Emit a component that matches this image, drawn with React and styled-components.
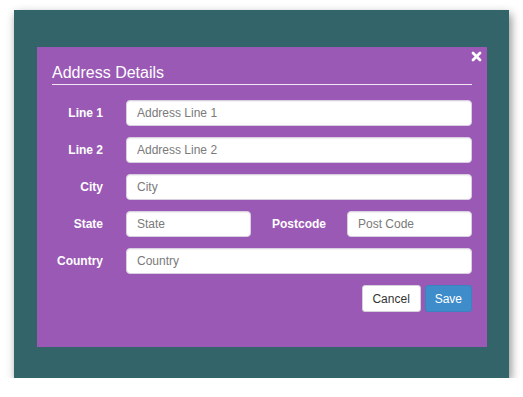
import React from "react";
import styled, { createGlobalStyle } from "styled-components";

const Global = createGlobalStyle`
  html, body { margin: 0; padding: 0; background: #ffffff; }
  body { font-family: "Liberation Sans", Arial, sans-serif; }
  * { box-sizing: border-box; }
`;

const Frame = styled.div`
  margin: 10px 14px 0 14px;
  height: 368px;
  background: #33646a;
  padding: 37px 22px 31px 23px;
  box-shadow: 2px 4px 9px rgba(0, 0, 0, 0.45);
`;

const Panel = styled.div`
  position: relative;
  height: 300px;
  background: #9b59b6;
  padding: 16px 15px 0 15px;
`;

const Close = styled.button`
  position: absolute;
  top: 3px;
  right: 5px;
  width: 12px;
  height: 12px;
  padding: 0;
  border: 0;
  background: transparent;
  display: flex;
  align-items: center;
  justify-content: center;
  cursor: pointer;
`;

const Title = styled.h2`
  margin: 0;
  font-size: 16px;
  line-height: 20px;
  font-weight: normal;
  color: #ffffff;
  padding-bottom: 1px;
  border-bottom: 1px solid rgba(255, 255, 255, 0.85);
`;

const Form = styled.form`
  margin-top: 15px;
  display: grid;
  grid-template-columns: 51px 1fr;
  column-gap: 23px;
  row-gap: 11px;
  align-items: center;
`;

const Label = styled.label`
  font-size: 12px;
  font-weight: bold;
  color: #ffffff;
  text-align: ${(p) => (p.$center ? "center" : "right")};
  white-space: nowrap;
`;

const Input = styled.input`
  width: 100%;
  height: 26px;
  padding: 0 10px;
  border: 1px solid #d8cfe0;
  border-radius: 4px;
  background: #ffffff;
  font-family: "Liberation Sans", Arial, sans-serif;
  font-size: 12px;
  color: #555;
  outline: none;
  box-shadow: inset 0 1px 1px rgba(0, 0, 0, 0.06);
  &::placeholder { color: #7a7a7a; }
`;

const SplitRow = styled.div`
  display: grid;
  grid-template-columns: 125px 1fr 125px;
  align-items: center;
`;

const Actions = styled.div`
  grid-column: 1 / -1;
  display: flex;
  justify-content: flex-end;
  gap: 4px;
`;

const Button = styled.button`
  height: 27px;
  padding: 0 ${(p) => (p.$primary ? "9px" : "9px")};
  border-radius: 3px;
  font-family: "Liberation Sans", Arial, sans-serif;
  font-size: 12px;
  border: 1px solid ${(p) => (p.$primary ? "#3a82c0" : "#d6d0da")};
  background: ${(p) => (p.$primary ? "#3f8ccb" : "#ffffff")};
  color: ${(p) => (p.$primary ? "#ffffff" : "#333333")};
  min-width: ${(p) => (p.$primary ? "46px" : "59px")};
`;

const CloseIcon = () => (
  <svg width="11" height="11" viewBox="0 0 11 11">
    <path d="M2 2 L9 9 M9 2 L2 9" stroke="#ffffff" strokeWidth="2.8" strokeLinecap="round" />
  </svg>
);

export default function App() {
  return (
    <>
      <Global />
      <Frame>
        <Panel>
          <Close type="button" aria-label="Close">
            <CloseIcon />
          </Close>
          <Title>Address Details</Title>
          <Form onSubmit={(e) => e.preventDefault()}>
            <Label>Line 1</Label>
            <Input placeholder="Address Line 1" />
            <Label>Line 2</Label>
            <Input placeholder="Address Line 2" />
            <Label>City</Label>
            <Input placeholder="City" />
            <Label>State</Label>
            <SplitRow>
              <Input placeholder="State" />
              <Label $center>Postcode</Label>
              <Input placeholder="Post Code" />
            </SplitRow>
            <Label>Country</Label>
            <Input placeholder="Country" />
            <Actions>
              <Button type="button">Cancel</Button>
              <Button type="submit" $primary>Save</Button>
            </Actions>
          </Form>
        </Panel>
      </Frame>
    </>
  );
}
